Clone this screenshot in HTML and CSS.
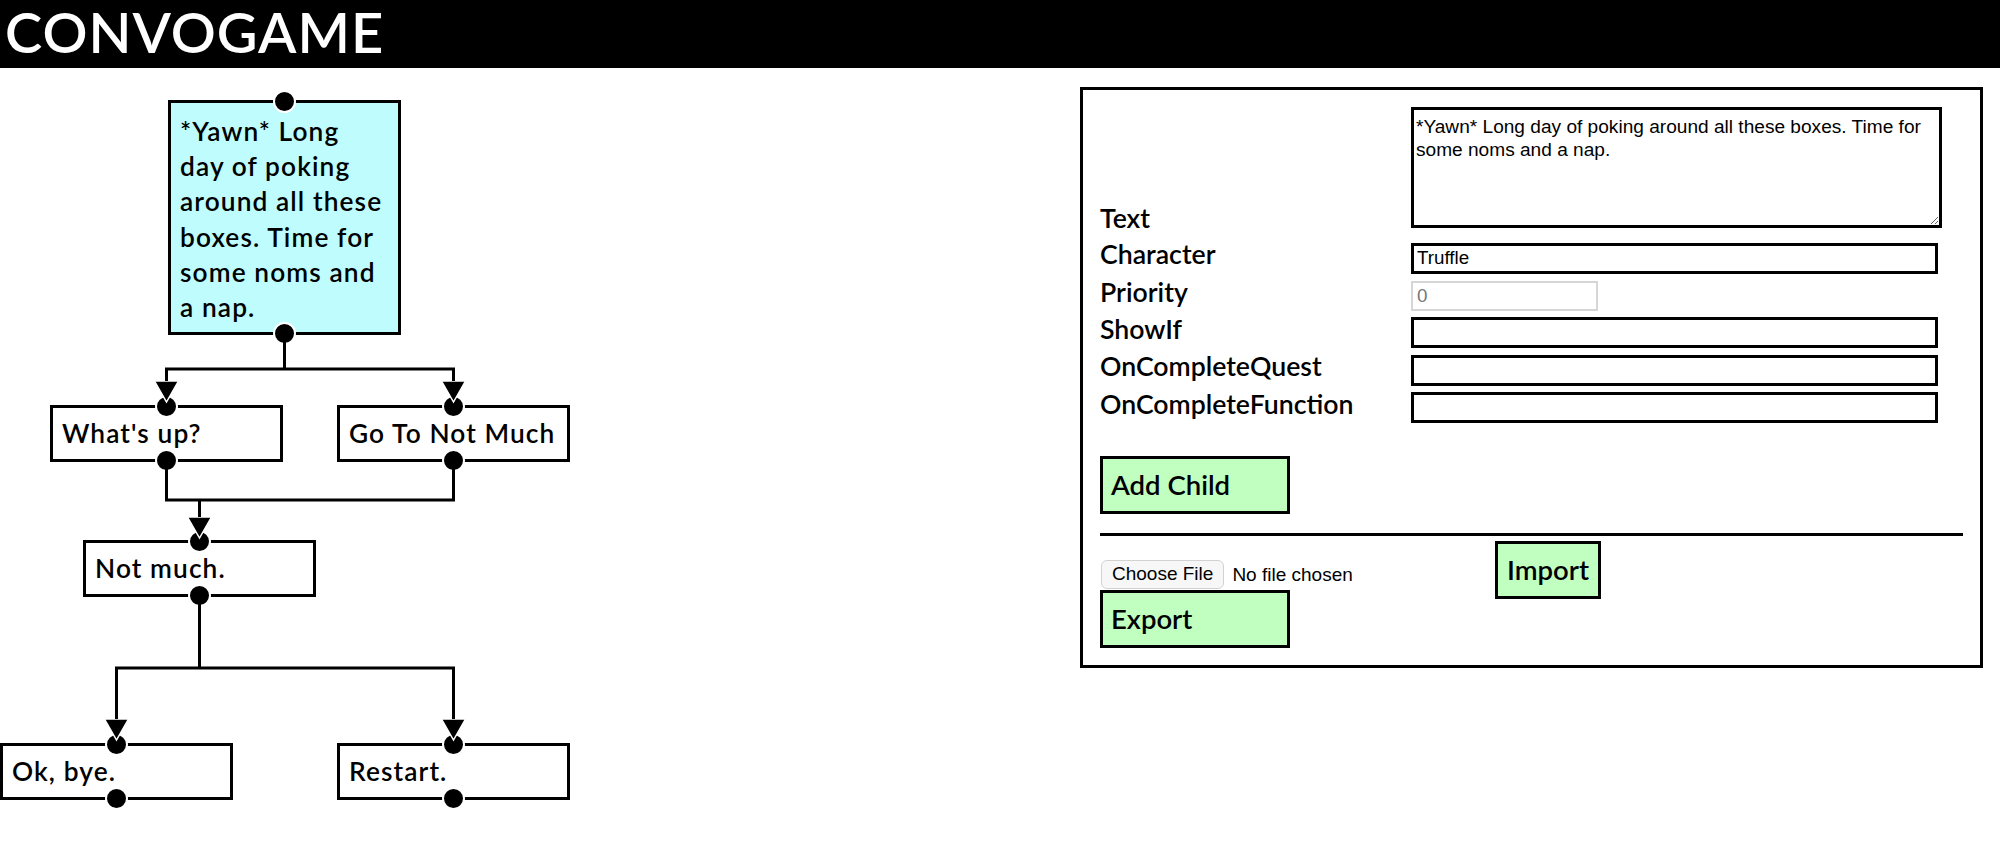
FILE: index.html
```html
<!DOCTYPE html>
<html lang="en">
<head>
<meta charset="utf-8">
<title>ConvoGame</title>
<link rel="stylesheet" href="styles.css">
</head>
<body>
<header class="topbar">
  <h1 class="brand">CONVOGAME</h1>
</header>
<main class="workspace">
  <div class="tree">
    <div class="node node-root is-selected">*Yawn* Long<br>day of poking<br>around all these<br>boxes. Time for<br>some noms and<br>a nap.</div>
    <div class="node node-a">What's up?</div>
    <div class="node node-b">Go To Not Much</div>
    <div class="node node-c">Not much.</div>
    <div class="node node-d">Ok, bye.</div>
    <div class="node node-e">Restart.</div>
    <svg class="links" width="572" height="740" viewBox="0 0 572 740" aria-hidden="true">
      <g class="dots">
        <circle cx="284.5" cy="33.5" r="10.5"/>
        <circle cx="284.5" cy="265.5" r="10.5"/>
        <circle cx="166.5" cy="338.5" r="10.5"/>
        <circle cx="166.5" cy="392.5" r="10.5"/>
        <circle cx="453.5" cy="338.5" r="10.5"/>
        <circle cx="453.5" cy="392.5" r="10.5"/>
        <circle cx="199.5" cy="473.5" r="10.5"/>
        <circle cx="199.5" cy="527.5" r="10.5"/>
        <circle cx="116.5" cy="676.5" r="10.5"/>
        <circle cx="116.5" cy="730.5" r="10.5"/>
        <circle cx="453.5" cy="676.5" r="10.5"/>
        <circle cx="453.5" cy="730.5" r="10.5"/>
      </g>
      <g class="arrows">
        <polygon points="154.5,313 178.5,313 166.5,334"/>
        <polygon points="441.5,313 465.5,313 453.5,334"/>
        <polygon points="187.5,449 211.5,449 199.5,470"/>
        <polygon points="104.5,651 128.5,651 116.5,672"/>
        <polygon points="441.5,651 465.5,651 453.5,672"/>
      </g>
      <path class="wire" d="M284.5 265.5 V301 M166.5 313 V301 H453.5 V313 M166.5 392.5 V432 H453.5 V392.5 M199.5 432 V449 M199.5 527.5 V600 M116.5 651 V600 H453.5 V651"/>
    </svg>
  </div>

  <section class="editor">
    <div class="field field-text">
      <label class="field-label" for="f-text">Text</label>
      <textarea id="f-text" class="textarea">*Yawn* Long day of poking around all these boxes. Time for some noms and a nap.</textarea>
    </div>
    <div class="field">
      <label class="field-label" for="f-char">Character</label>
      <input id="f-char" class="text-input" type="text" value="Truffle">
    </div>
    <div class="field">
      <label class="field-label" for="f-prio">Priority</label>
      <input id="f-prio" class="num-input" type="number" placeholder="0">
    </div>
    <div class="field">
      <label class="field-label" for="f-show">ShowIf</label>
      <input id="f-show" class="text-input" type="text">
    </div>
    <div class="field">
      <label class="field-label" for="f-quest">OnCompleteQuest</label>
      <input id="f-quest" class="text-input" type="text">
    </div>
    <div class="field">
      <label class="field-label" for="f-func">OnCompleteFunction</label>
      <input id="f-func" class="text-input" type="text">
    </div>
    <button class="btn btn-wide btn-add" type="button">Add Child</button>
    <hr class="divider">
    <div class="io-row">
      <input class="file-input" type="file">
      <button class="btn btn-auto" type="button">Import</button>
    </div>
    <button class="btn btn-wide btn-export" type="button">Export</button>
  </section>
</main>
</body>
</html>
```

FILE: styles.css
```css
html, body {
  margin: 0;
  padding: 0;
  background: #ffffff;
  color: #000000;
  font-family: "Lato", "Noto Sans", sans-serif;
}

.topbar {
  height: 68px;
  background: #000000;
  display: flex;
  align-items: center;
  padding: 0 0 5px 5px;
  box-sizing: border-box;
}

.brand {
  margin: 0;
  color: #ffffff;
  font-family: "Lato", sans-serif;
  font-weight: 600;
  font-size: 56px;
  line-height: 1;
  letter-spacing: 1px;
}

.workspace {
  display: flex;
  justify-content: space-between;
  align-items: flex-start;
  padding-right: 17px;
}

/* ---------- conversation tree (free canvas) ---------- */
.tree {
  position: relative;
  flex: none;
  width: 572px;
  height: 740px;
}

.node {
  position: absolute;
  box-sizing: border-box;
  width: 233px;
  border: 3px solid #000000;
  background: #ffffff;
  padding: 8px 9px;
  font-size: 26.3px;
  font-weight: 600;
  line-height: 35px;
  letter-spacing: 1.1px;
  white-space: nowrap;
}

.node.is-selected {
  background: #bffcfd;
}

.node-root {
  left: 168px;
  top: 32px;
  height: 235px;
  padding: 11px 9px 0;
  line-height: 35.2px;
}
.node-a { left: 50px; top: 337px; }
.node-b { left: 337px; top: 337px; }
.node-c { left: 83px; top: 472px; }
.node-d { left: 0; top: 675px; }
.node-e { left: 337px; top: 675px; }

.links {
  position: absolute;
  left: 0;
  top: 0;
  overflow: visible;
  pointer-events: none;
}

.links .dots circle {
  fill: #000000;
  stroke: #ffffff;
  stroke-width: 2;
}

.links .arrows polygon {
  fill: #000000;
  stroke: #ffffff;
  stroke-width: 1.5;
  stroke-linejoin: miter;
}

.links .wire {
  fill: none;
  stroke: #000000;
  stroke-width: 3;
}

/* ---------- editor panel ---------- */
.editor {
  flex: none;
  width: 903px;
  box-sizing: border-box;
  margin-top: 19px;
  border: 3px solid #000000;
  padding: 17px;
}

.field {
  display: flex;
  align-items: baseline;
  font-size: 26.67px;
  font-weight: 600;
  line-height: 36.6px;
  white-space: nowrap;
}

.field-text {
  align-items: flex-end;
  margin-bottom: 8px;
}

.field-label {
  flex: none;
  width: 311px;
}

.field-text .field-label {
  line-height: 20px;
}

.textarea {
  box-sizing: border-box;
  width: 531px;
  height: 121px;
  margin: 0;
  border: 3px solid #000000;
  padding: 5px 2px;
  font-family: "Liberation Sans", Arial, sans-serif;
  font-size: 19.1px;
  font-weight: 400;
  line-height: 23px;
  color: #000000;
  background: #ffffff;
}

.text-input,
.num-input {
  box-sizing: border-box;
  margin: 0;
  font-family: "Liberation Sans", Arial, sans-serif;
  font-size: 18.8px;
  font-weight: 400;
  color: #000000;
  background: #ffffff;
}

.text-input {
  width: 527px;
  height: 31px;
  border: 3px solid #000000;
  padding: 0 3px;
}

.num-input {
  width: 187px;
  height: 30px;
  border: 2px solid #d6d6d6;
  padding: 0 4px;
}

.num-input::placeholder {
  color: #777777;
}

.btn {
  display: block;
  box-sizing: border-box;
  margin: 0;
  border: 3px solid #000000;
  background: #c0ffc0;
  color: #000000;
  font-family: "Lato", sans-serif;
  font-weight: 600;
  font-size: 27.5px;
  line-height: 32px;
  text-align: left;
  cursor: pointer;
}

.btn-wide {
  width: 190px;
  height: 58px;
  padding: 0 8px;
}

.btn-auto {
  height: 58px;
  padding: 0 9px;
}

.btn-add {
  margin-top: 33px;
}

.divider {
  margin: 19px 0 0;
  border: 0;
  border-top: 3px solid #000000;
  height: 0;
}

.io-row {
  display: flex;
  align-items: baseline;
  margin-top: 5px;
}

.file-input {
  width: 395px;
  margin: 0;
  font-family: "Liberation Sans", Arial, sans-serif;
  font-size: 19px;
  color: #000000;
}

.file-input::file-selector-button {
  font: inherit;
  height: 29px;
  margin: 0 8px 0 1px;
  padding: 0 10px;
  background: #f7f7f7;
  border: 1px solid #d2d2d2;
  border-radius: 6px;
  color: #000000;
}

.btn-export {
  margin-top: -9px;
}
```
